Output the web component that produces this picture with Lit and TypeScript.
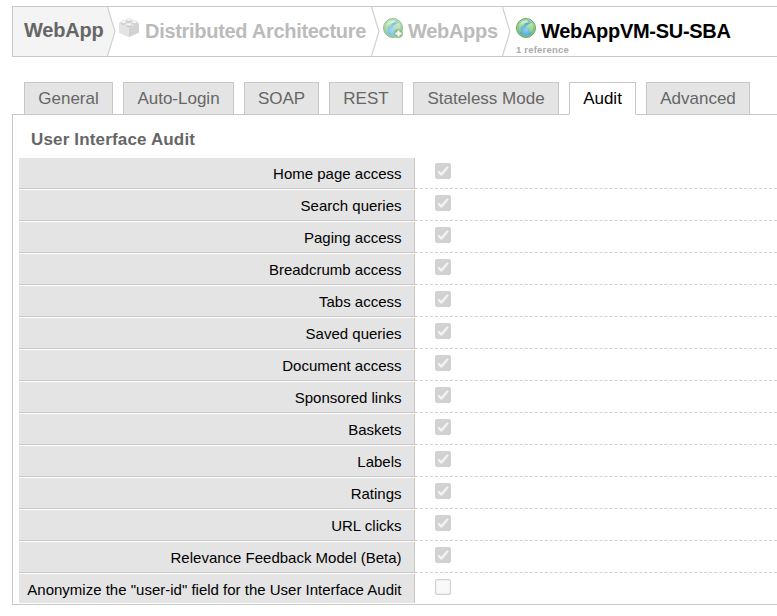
import { LitElement, html, css, svg, nothing } from "lit";
import { customElement, property } from "lit/decorators.js";
import { classMap } from "lit/directives/class-map.js";

@customElement("globe-icon")
class GlobeIcon extends LitElement {
  @property({ type: Boolean }) plus = false;
  static styles = css`
    :host { display: block; width: 20px; height: 20px; }
    :host([plus]) { opacity: 0.75; }
    svg { display: block; }
  `;
  render() {
    return html`<svg width="20" height="20" viewBox="0 0 20 20">
      <defs>
        <radialGradient id="sea" cx="0.5" cy="0.6" r="0.55">
          <stop offset="0" stop-color="#8fd0f2"></stop>
          <stop offset="0.7" stop-color="#58aadb"></stop>
          <stop offset="1" stop-color="#4d9cc0"></stop>
        </radialGradient>
        <linearGradient id="rim" x1="0" y1="0" x2="0" y2="1">
          <stop offset="0" stop-color="#a9d9a0"></stop>
          <stop offset="1" stop-color="#7dbd76"></stop>
        </linearGradient>
        <linearGradient id="land" x1="0" y1="0" x2="0" y2="1">
          <stop offset="0" stop-color="#bfe6ae"></stop>
          <stop offset="1" stop-color="#84cc7c"></stop>
        </linearGradient>
      </defs>
      <circle cx="10" cy="10" r="9.500" fill="url(#rim)" stroke="#66a962" stroke-width="1"></circle>
      <circle cx="10" cy="10" r="7.800" fill="url(#sea)"></circle>
      <path d="M2.300 9C2.800 5.200 6 2.300 10 2.300c1 0 1.800.2 2.500.5L10.500 4.800 8.700 5.600 7.600 7.800l-2 1-1.200 2.200.8 1.800-1 1.500C2.800 13 2.100 11 2.300 9z" fill="url(#land)"></path>
      <path d="M10 8.600l2.300-2.100 3.700-1.500c1.500 1.700 2.100 4.200 1.400 6.500-.5 1.600-1.500 3-3 3.800l-.7-2.300-.4-1.800-2.300-.5z" fill="url(#land)"></path>
      <path d="M3.500 7.200C5 3.500 8 2.300 10 2.300s5 .9 6.500 4.500C13 4.300 7.500 4.500 3.500 7.200z" fill="#fff" opacity=".35"></path>
      ${this.plus
        ? svg`<circle cx="15.500" cy="15.500" r="4.500" fill="#6aa860"></circle>
            <path d="M14.500 12.500h2v2h2v2h-2v2h-2v-2h-2v-2h2z" fill="#fff"></path>`
        : nothing}
    </svg>`;
  }
}

@customElement("audit-check")
class AuditCheck extends LitElement {
  @property({ type: Boolean }) checked = false;
  static styles = css`
    :host { display: block; width: 16px; height: 16px; }
    svg { display: block; }
  `;
  render() {
    return html`<svg width="16" height="16" viewBox="0 0 16 16">
      ${this.checked
        ? svg`<rect width="16" height="16" rx="2" fill="#d1d1d1"></rect>
            <path d="M3 8.300l3.300 3.300L13 3.800" fill="none" stroke="#f2f2f2" stroke-width="2.300"></path>`
        : svg`<rect x=".6" y=".6" width="14.800" height="14.800" rx="2" fill="#f9f9f9" stroke="#d1d1d1" stroke-width="1.200"></rect>`}
    </svg>`;
  }
}

const TABS = [
  { label: "General", width: 89 },
  { label: "Auto-Login", width: 111 },
  { label: "SOAP", width: 75 },
  { label: "REST", width: 74 },
  { label: "Stateless Mode", width: 146 },
  { label: "Audit", width: 67 },
  { label: "Advanced", width: 104 },
];

const ROWS = [
  "Home page access", "Search queries", "Paging access", "Breadcrumb access",
  "Tabs access", "Saved queries", "Document access", "Sponsored links",
  "Baskets", "Labels", "Ratings", "URL clicks",
  "Relevance Feedback Model (Beta)",
  'Anonymize the "user-id" field for the User Interface Audit',
];

@customElement("app-root")
class AppRoot extends LitElement {
  static styles = css`
    :host {
      display: block; box-sizing: border-box; height: 616px; overflow: hidden;
      padding: 6px 0 0 12px; background: #fff;
      font-family: "Liberation Sans", Arial, sans-serif;
    }
    * { box-sizing: border-box; }
    .crumbs {
      display: flex; height: 51px; border: 1px solid #c8c8c8; border-right: 0;
      font-weight: bold; font-size: 20px; line-height: 24px; color: #bbb; white-space: nowrap;
    }
    .home { width: 94px; padding: 11px 0 0 11px; background: #f4f4f4; color: #666; letter-spacing: -0.2px; }
    .arrow { flex: none; display: block; width: 9px; height: 49px; }
    .crumb { display: flex; padding-top: 11px; }
    .crumb .text { padding-top: 1px; margin-left: 5px; letter-spacing: -0.3px; }
    .arch { width: 255px; padding-left: 3px; }
    .arch .text { margin-left: 6px; }
    .apps { width: 122px; padding-left: 3px; }
    .current { padding-left: 5px; color: #000; display: block; }
    .title { display: flex; height: 25px; }
    .refs { font-size: 9.500px; line-height: 11px; letter-spacing: 0.2px; color: #aaa; padding-top: 1px; }
    .tabs { display: flex; gap: 10px; margin: 25px 0 -1px 12px; height: 33px; position: relative; }
    .tab {
      flex: none; height: 33px; border: 1px solid #c8c8c8; background: #e4e4e4; color: #666;
      font-size: 17px; line-height: 31px; text-align: center; white-space: nowrap;
    }
    .tab.active { background: #fff; border-bottom-color: #fff; color: #000; }
    .panel { height: 491px; border: 1px solid #c8c8c8; border-right: 0; padding-left: 6px; }
    h2 { margin: 0; height: 43px; padding-left: 12px; font-size: 17px; line-height: 49px; letter-spacing: 0.16px; color: #666; }
    .row { display: flex; height: 32px; }
    .label {
      width: 396px; height: 31px; padding-right: 12.5px; border-right: 1px solid #c8c8c8;
      border-bottom: 1px solid #c8c8c8; background: #e4e4e4; color: #000;
      font-size: 15px; line-height: 32px; text-align: right; white-space: nowrap;
    }
    .value { flex: 1; height: 31px; padding: 5px 0 0 20px; border-bottom: 1px dashed #d1d1d1; }
    .row:last-child { height: 29px; }
    .row:last-child .label, .row:last-child .value { height: 29px; border-bottom: 0; }
  `;

  private arrow(fill = "#fff") {
    return html`<svg class="arrow" viewBox="0 0 9 49">
      <path d="M0 0L7.500 24.500L0 49z" fill=${fill}></path>
      <path d="M.5 0L8 24.500L.5 49" fill="none" stroke="#d0d0d0" stroke-width="1.200"></path>
    </svg>`;
  }

  private brick() {
    return html`<svg width="20" height="20" viewBox="0 0 20 20">
      <path d="M0 5L10 1l10 4v9.500L10 19 0 14.500z" fill="#d4d4d4"></path>
      <path d="M0 5L10 9.500V19L0 14.500z" fill="#e4e4e4"></path>
      <path d="M10 9.500L20 5v9.500L10 19z" fill="#d2d2d2"></path>
      <path d="M0 5L10 1l10 4-10 4.500z" fill="#ececec"></path>
      ${[[10, 1.8], [4.6, 3.9], [15.4, 3.9], [10, 6.4]].map(
        ([x, y]) => svg`<ellipse cx=${x} cy=${y + 1.2} rx="2.800" ry="1.700" fill="#c2c2c2"></ellipse>
          <ellipse cx=${x} cy=${y} rx="2.600" ry="1.500" fill="#f6f6f6" stroke="#d0d0d0" stroke-width=".5"></ellipse>`
      )}
    </svg>`;
  }

  render() {
    return html`
      <nav class="crumbs">
        <div class="home">WebApp</div>
        ${this.arrow("#f4f4f4")}
        <div class="crumb arch">${this.brick()}<span class="text">Distributed Architecture</span></div>
        ${this.arrow()}
        <div class="crumb apps"><globe-icon plus></globe-icon><span class="text">WebApps</span></div>
        ${this.arrow()}
        <div class="crumb current">
          <div class="title"><globe-icon></globe-icon><span class="text">WebAppVM-SU-SBA</span></div>
          <div class="refs">1 reference</div>
        </div>
      </nav>
      <div class="tabs">
        ${TABS.map((t) => html`<div class=${classMap({ tab: true, active: t.label === "Audit" })} style="width:${t.width}px">${t.label}</div>`)}
      </div>
      <main class="panel">
        <h2>User Interface Audit</h2>
        ${ROWS.map((label, i) => html`<div class="row">
          <div class="label">${label}</div>
          <div class="value"><audit-check ?checked=${i < ROWS.length - 1}></audit-check></div>
        </div>`)}
      </main>`;
  }
}
